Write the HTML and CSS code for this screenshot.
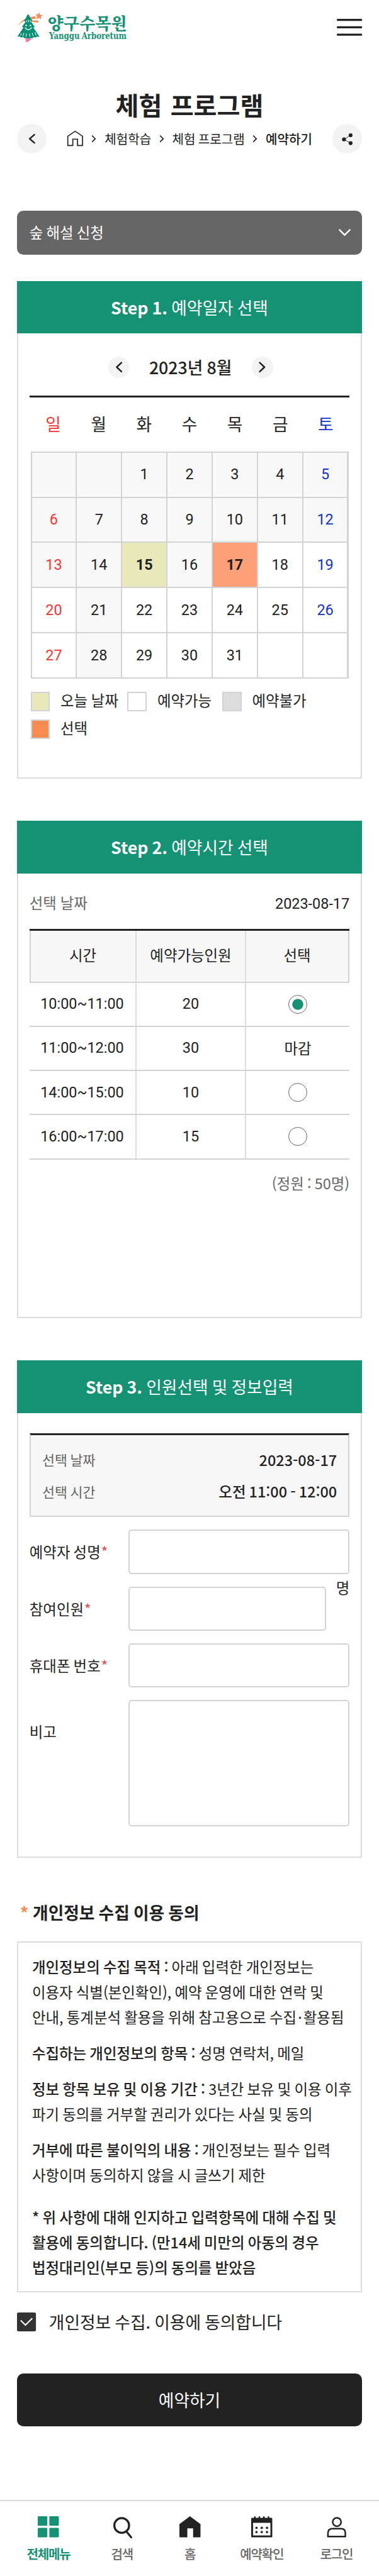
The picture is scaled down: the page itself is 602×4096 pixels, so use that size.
FILE: index.html
```html
<!DOCTYPE html>
<html lang="ko">
<head>
<meta charset="utf-8">
<title>양구수목원 - 체험 프로그램 예약하기</title>
<link rel="stylesheet" href="styles.css">
</head>
<body>
<header class="topbar">
  <svg class="logo" viewBox="0 0 208 56" role="img" aria-label="양구수목원">
    <path d="M16 45h11v6l-4 3-2 2h-4l-1-3z" fill="#ee7fae"/>
    <path d="M1 26Q10 13 20 10L34 7Q36 8 35 12L24 13Q10 15 1 26z" fill="#f78b52"/>
    <path d="M25 15l14 0q3 2 1 4l-13-2z" fill="#f78b52"/>
    <path d="M42.500 0l1.600 4.600 4.900.4-3.900 3 .8 5-4.400-2.900-4.800 1.800 1.600-4.800-3.300-3.800 5 .4z" fill="#f78b52"/>
    <path d="M21.500 3.500q1.600 1.200 2.600 4l5.400 9-3 .6 7.300 10.500-3 .5 12 18-5-.7-2 2-4-1-2.500 2.500-3.500-1-4 1.800-4-1.800-3.500 1-2.500-2.500-4 1-2-2-5 .4 11.500-17.700-3-.5 7.200-10.500-3-.6 4.800-9q.5-2.500 2.200-4z" fill="#039074"/>
    <g fill="none" stroke="#fff" stroke-linecap="round" stroke-width="1.300">
      <path d="M19 15l-.8 2.500M22 14.500v3M25 15l.6 2.500M8 40l-1 3M13 39l-1.500 5M18 40l-.7 5M24 40l.6 5M29 39l1.600 5M34 38l2.500 5"/>
      <path d="M15.500 29q6 7.500 12 0" stroke-width="1.800"/>
    </g>
    <circle cx="17.500" cy="24.500" r="1.600" fill="#fff"/><circle cx="25.500" cy="24.500" r="1.600" fill="#fff"/>
    <text class="logo-ko" x="58" y="32" textLength="151" lengthAdjust="spacingAndGlyphs">양구수목원</text>
    <text class="logo-en" x="61" y="50.500" textLength="147" lengthAdjust="spacingAndGlyphs">Yanggu Arboretum</text>
  </svg>
  <svg class="menu" viewBox="0 0 48 32"><g fill="#222"><rect width="48" height="4" rx="1.500"/><rect y="14" width="48" height="4" rx="1.500"/><rect y="28" width="48" height="4" rx="1.500"/></g></svg>
</header>

<main class="page">
  <h1 class="title">체험 프로그램</h1>
  <div class="crumb-row">
    <span class="round"><svg viewBox="0 0 56 56"><path d="M33 20.500l-9 7.700 9 7.800" class="ln thick"/></svg></span>
    <nav class="crumbs">
      <svg class="home" viewBox="0 0 32 32"><path d="M2 29.200V11.500L16 2l14 9.500v17.700H20.500V17h-9v12.200z" class="ln"/></svg>
      <svg class="sep" viewBox="0 0 10 16"><path d="M1.500 2l6 6-6 6" class="ln"/></svg>
      <span>체험학습</span>
      <svg class="sep" viewBox="0 0 10 16"><path d="M1.500 2l6 6-6 6" class="ln"/></svg>
      <span>체험 프로그램</span>
      <svg class="sep" viewBox="0 0 10 16"><path d="M1.500 2l6 6-6 6" class="ln"/></svg>
      <span class="here">예약하기</span>
    </nav>
    <span class="round"><svg viewBox="0 0 56 56"><path d="M34.500 21.500l-12.500 8 12.500 7" fill="none" stroke="#222"/><g fill="#222"><circle cx="34.500" cy="21.500" r="3.700"/><circle cx="22" cy="29.500" r="3.700"/><circle cx="34.500" cy="36.500" r="3.700"/></g></svg></span>
  </div>

  <div class="select"><span>숲 해설 신청</span><svg viewBox="0 0 26 16"><path d="M2 2l11 11L24 2" fill="none" stroke="#fff" stroke-width="3"/></svg></div>

  <section class="card step1">
    <h2 class="card-head"><b>Step 1.</b> 예약일자 선택</h2>
    <div class="card-body">
      <div class="month">
        <span class="round small"><svg viewBox="0 0 40 40"><path d="M25 11.500l-9 8.500 9 8.500" class="ln thick"/></svg></span>
        <strong>2023년 8월</strong>
        <span class="round small"><svg viewBox="0 0 40 40"><path d="M15 11.500l9 8.500-9 8.500" class="ln thick"/></svg></span>
      </div>
      <div class="week"><span class="sun">일</span><span>월</span><span>화</span><span>수</span><span>목</span><span>금</span><span class="sat">토</span></div>
      <div class="days">
        <i class="off"></i><i class="off"></i><i class="off">1</i><i class="off">2</i><i class="off">3</i><i class="off">4</i><i class="off sat">5</i>
        <i class="off sun">6</i><i class="off">7</i><i class="off">8</i><i class="off">9</i><i class="off">10</i><i class="off">11</i><i class="off sat">12</i>
        <i class="off sun">13</i><i class="off">14</i><i class="today">15</i><i class="off">16</i><i class="picked">17</i><i>18</i><i class="sat">19</i>
        <i class="sun">20</i><i class="off">21</i><i>22</i><i>23</i><i>24</i><i>25</i><i class="sat">26</i>
        <i class="sun">27</i><i class="off">28</i><i>29</i><i>30</i><i>31</i><i></i><i></i>
      </div>
      <ul class="legend">
        <li class="l-today">오늘 날짜</li><li>예약가능</li><li class="l-off">예약불가</li><li class="l-picked">선택</li>
      </ul>
    </div>
  </section>

  <section class="card step2">
    <h2 class="card-head"><b>Step 2.</b> 예약시간 선택</h2>
    <div class="card-body">
      <div class="chosen"><span>선택 날짜</span><em>2023-08-17</em></div>
      <div class="times">
        <div class="tr th"><span>시간</span><span>예약가능인원</span><span>선택</span></div>
        <div class="tr"><span>10:00~11:00</span><span>20</span><span><i class="radio on"></i></span></div>
        <div class="tr"><span>11:00~12:00</span><span>30</span><span class="closed">마감</span></div>
        <div class="tr"><span>14:00~15:00</span><span>10</span><span><i class="radio"></i></span></div>
        <div class="tr"><span>16:00~17:00</span><span>15</span><span><i class="radio"></i></span></div>
      </div>
      <p class="capacity">(정원 : 50명)</p>
    </div>
  </section>

  <section class="card step3">
    <h2 class="card-head"><b>Step 3.</b> 인원선택 및 정보입력</h2>
    <div class="card-body">
      <dl class="summary">
        <dt>선택 날짜</dt><dd>2023-08-17</dd>
        <dt>선택 시간</dt><dd>오전 11:00 - 12:00</dd>
      </dl>
      <div class="field"><label>예약자 성명<sup>*</sup></label><span class="input"></span></div>
      <div class="field"><label>참여인원<sup>*</sup></label><span class="input"></span><span class="unit">명</span></div>
      <div class="field"><label>휴대폰 번호<sup>*</sup></label><span class="input"></span></div>
      <div class="field memo"><label>비고</label><span class="input"></span></div>
    </div>
  </section>

  <h3 class="agree-title"><span>*</span>개인정보 수집 이용 동의</h3>
  <div class="terms">
    <p><b>개인정보의 수집 목적 :</b> 아래 입력한 개인정보는<br>이용자 식별(본인확인), 예약 운영에 대한 연락 및<br>안내, 통계분석 활용을 위해 참고용으로 수집<span class="dot">·</span>활용됨</p>
    <p><b>수집하는 개인정보의 항목 :</b> 성명 연락처, 메일</p>
    <p><b>정보 항목 보유 및 이용 기간 :</b> 3년간 보유 및 이용 이후<br>파기 동의를 거부할 권리가 있다는 사실 및 동의</p>
    <p><b>거부에 따른 불이익의 내용 :</b> 개인정보는 필수 입력<br>사항이며 동의하지 않을 시 글쓰기 제한</p>
    <p class="notice">* 위 사항에 대해 인지하고 입력항목에 대해 수집 및<br>활용에 동의합니다. (만14세 미만의 아동의 경우<br>법정대리인(부모 등)의 동의를 받았음</p>
  </div>
  <div class="check">
    <svg viewBox="0 0 36 36"><rect width="36" height="36" rx="3" fill="#333"/><path d="M7 15l9 9L29 11" fill="none" stroke="#fff" stroke-width="2.600"/></svg>
    <span>개인정보 수집. 이용에 동의합니다</span>
  </div>
  <div class="submit">예약하기</div>
</main>

<nav class="tabs">
  <a class="active"><svg viewBox="0 0 40 40"><g fill="#159274"><rect width="18" height="18" rx="1.500"/><rect x="22" width="18" height="18" rx="1.500"/><rect y="22" width="18" height="18" rx="1.500"/><rect x="22" y="22" width="18" height="18" rx="1.500"/></g></svg>전체메뉴</a>
  <a><svg viewBox="0 0 40 40"><g fill="none" stroke="#222" stroke-width="4"><circle cx="19.500" cy="17.500" r="14"/><path d="M28.500 29l9 11" stroke-linecap="round" stroke-width="3.800"/></g></svg>검색</a>
  <a><svg viewBox="0 0 40 40"><path d="M20 0l20 15v23.500q0 1.500-1.500 1.500H26V23H15v17H1.500Q0 40 0 38.500V15z" fill="#222"/></svg>홈</a>
  <a><svg viewBox="0 0 40 40"><rect y="3" width="40" height="37" rx="1.500" fill="#222"/><path d="M7 4V1.500M15.500 4V1.500M24 4V1.500M33 4V1.500" stroke="#222" stroke-width="3" stroke-linecap="round"/><rect x="3.500" y="12.500" width="33" height="24" fill="#fff"/><g fill="#222"><circle cx="10" cy="22" r="2.200"/><circle cx="20" cy="22" r="2.200"/><circle cx="30" cy="22" r="2.200"/><circle cx="10" cy="30" r="2.200"/><circle cx="20" cy="30" r="2.200"/><circle cx="30" cy="30" r="2.200"/></g></svg>예약확인</a>
  <a><svg viewBox="0 0 40 40"><g fill="none" stroke="#222" stroke-width="3"><circle cx="20.500" cy="11" r="8"/><path d="M3.500 38.500V32q0-8.500 9-8.500h16q8 0 8 8.500v6.500z"/></g></svg>로그인</a>
</nav>
</body>
</html>
```
FILE: styles.css
```css
* { box-sizing: border-box; margin: 0; padding: 0; }
html { font-size: 8.365px; }
body {
  display: flex;
  flex-direction: column;
  height: 4096px;
  overflow: hidden;
  background: #fff;
  color: #222;
  font-family: "Noto Sans CJK KR", sans-serif;
  font-size: 2.8rem;
  line-height: 1.5;
  word-spacing: -.058em;
}
svg { display: block; overflow: visible; flex: none; }
ul { list-style: none; }
i, em { font-style: normal; }
.ln { fill: none; stroke: #222; stroke-width: 2; }
.thick { stroke-width: 3; stroke-linecap: round; stroke-linejoin: round; }

.topbar {
  display: flex;
  justify-content: space-between;
  align-items: center;
  height: 10.4rem;
  padding: 0 3.2rem;
}
.logo { width: 20.8rem; height: 5.6rem; }
.logo-ko { font: 900 31px "Noto Serif CJK KR", "Noto Sans CJK KR", serif; fill: #159274; }
.logo-en { font: 700 17px "DejaVu Serif", serif; fill: #159274; }
.menu { width: 4.8rem; height: 3.2rem; }

.page { padding: 5.8rem 3.2rem 0; }
.title { font-size: 4.8rem; font-weight: 700; line-height: 7.2rem; text-align: center; word-spacing: .05em; }
.crumb-row { display: flex; justify-content: space-between; align-items: center; height: 5.6rem; margin-top: .2rem; }
.round { width: 5.6rem; height: 5.6rem; border-radius: 50%; background: #f3f3f3; }
.round.small { width: 4rem; height: 4rem; }
.crumbs { display: flex; align-items: center; gap: 1.5rem; font-size: 2.4rem; line-height: 3.6rem; }
.home { width: 3.2rem; height: 3.2rem; margin-top: -.2rem; }
.sep { width: 1rem; height: 1.6rem; }
.here { font-weight: 500; }

.select {
  display: flex;
  justify-content: space-between;
  align-items: center;
  height: 8.4rem;
  margin-top: 10.8rem;
  padding: 0 2.1rem 0 2.4rem;
  border-radius: 1.2rem;
  background: #666;
  color: #fff;
}
.select svg { width: 2.5rem; height: 1.6rem; }

.card { height: 94.6rem; margin-top: 8rem; border: 2px solid #ddd; border-top: 0; }
.step1 { margin-top: 5rem; }
.card-head {
  height: 10rem;
  margin: 0 -2px;
  background: #159274;
  color: #fff;
  font-size: 3.2rem;
  font-weight: 400;
  line-height: 10rem;
  text-align: center;
}
.card-body { padding: 0 calc(2.4rem - 2px); }

.month { display: flex; justify-content: center; gap: 3.8rem; height: 11.8rem; padding: 4.4rem 0 0 .4rem; }
.month strong { font-size: 3.2rem; font-weight: 500; line-height: 4rem; }
.week {
  display: grid;
  grid-template-columns: repeat(7, 1fr);
  height: 10.6rem;
  padding: 0 .2rem;
  border-top: 3px solid #222;
  font-size: 3.2rem;
  line-height: 10rem;
  text-align: center;
}
.sun { color: #ff3333; }
.sat { color: #1233cc; }
.days {
  display: grid;
  grid-template-columns: repeat(7, 1fr);
  grid-template-rows: repeat(5, 1fr);
  gap: 2px;
  height: 43.2rem;
  margin: 0 .2rem;
  padding: 2px;
  background: #d3d3d3;
  font-family: Roboto, "Noto Sans CJK KR", sans-serif;
}
.days i { display: flex; align-items: center; justify-content: center; background: #fff; }
.days .off { background: #f8f8f8; }
.days .today { background: #e9e8ba; font-weight: 700; }
.days .picked { background: #fda077; font-weight: 700; }
.legend {
  display: grid;
  grid-template-columns: 18.4rem 18rem 18rem;
  row-gap: 2rem;
  margin: 2.8rem .2rem 0;
}
.legend li { display: flex; align-items: center; gap: 2rem; height: 3.2rem; white-space: nowrap; word-spacing: 0; font-family: Roboto, "Noto Sans CJK KR", sans-serif; }
.legend li::before { content: ""; width: 3.2rem; height: 3.2rem; border: 2px solid #d3d3d3; background: #fff; }
.legend .l-today::before { background: #e9e8ba; }
.legend .l-off::before { background: #ddd; }
.legend .l-picked::before { background: #f78b52; }

.chosen { display: flex; justify-content: space-between; height: 10.6rem; line-height: 11.6rem; word-spacing: 0; font-family: Roboto, "Noto Sans CJK KR", sans-serif; }
.chosen span { color: #666; }
.times { border-top: 3px solid #222; }
.tr {
  display: grid;
  grid-template-columns: 20.1rem 20.8rem 1fr;
  height: 8.4rem;
  border-bottom: 2px solid #d3d3d3;
  font-family: Roboto, "Noto Sans CJK KR", sans-serif;
  line-height: 8rem;
}
.th {
  grid-template-columns: calc(20.1rem - 2px) 20.8rem 1fr;
  height: calc(10.2rem - 3px);
  border-left: 2px solid #d3d3d3;
  border-right: 2px solid #d3d3d3;
  background: #f7f7f7;
  line-height: 9.8rem;
}
.tr span { display: flex; align-items: center; justify-content: center; }
.tr span + span { border-left: 2px solid #ddd; }
.tr span:first-child { padding-right: .1rem; }
.tr .closed { font-family: "Noto Sans CJK KR", sans-serif; }
.radio { display: block; width: 3.6rem; height: 3.6rem; border: 1.5px solid #666; border-radius: 50%; }
.radio.on { background: radial-gradient(circle, #159274 1rem, #fff 1.06rem); }
.capacity { margin-top: 2.4rem; color: #666; text-align: right; }

.summary {
  display: grid;
  grid-template-columns: auto 1fr;
  grid-auto-rows: 6rem;
  align-items: center;
  height: 16rem;
  margin-top: 3.8rem;
  padding: 1.8rem calc(2.4rem - 2px) 0;
  border: 2px solid #d3d3d3;
  border-top: 3px solid #222;
  background: #f7f7f7;
}
.summary dt { color: #666; font-size: 2.6rem; }
.summary dd { font-weight: 500; text-align: right; }
.field { display: grid; grid-template-columns: 18.8rem 1fr; height: 8.4rem; margin-top: 2.4rem; line-height: 8.4rem; }
.field:has(.unit) { grid-template-columns: 18.8rem 1fr 4.4rem; }
.field.memo { height: 24rem; line-height: 12rem; }
.field sup { color: #e8494d; vertical-align: baseline; font-size: 2.8rem; line-height: 0; padding-left: .1rem; }
.input { border: 2px solid #d3d3d3; border-radius: .6rem; background: #fff; }
.unit { line-height: 0; text-align: right; padding-top: .2rem; }

.agree-title { margin-top: 8rem; padding-left: .6rem; font-size: 3.2rem; font-weight: 700; line-height: 4.8rem; }
.agree-title span { color: #f78b52; margin-right: .8rem; }
.terms { height: 66.8rem; margin-top: 3rem; padding: calc(2.4rem - 2px) 0 0 calc(2.9rem - 2px); border: 2px solid #ddd; line-height: 4.8rem; white-space: nowrap; }
.terms p + p { margin-top: 2rem; }
.terms p.notice { margin-top: 3.2rem; font-weight: 500; }
.terms b { font-weight: 500; }
.dot { padding: 0 .25rem; }
.check { display: flex; align-items: center; gap: 2.5rem; height: 3.6rem; margin-top: 3.8rem; font-size: 3.2rem; line-height: 3.6rem; }
.check svg { width: 3.6rem; height: 3.6rem; }
.submit { height: 10rem; margin-top: 8rem; border-radius: 1.2rem; background: #222; color: #fff; font-size: 3.2rem; line-height: 10rem; text-align: center; }

.tabs {
  display: grid;
  grid-template-columns: 14rem 13.9rem 11.9rem 15.4rem 13rem;
  height: 14.5rem;
  margin-top: auto;
  padding: calc(3.1rem - 2px) 0 0 2.2rem;
  border-top: 2px solid #ddd;
}
.tabs a { display: flex; flex-direction: column; align-items: center; gap: 1.4rem; color: #666; font-size: 2.4rem; font-weight: 500; letter-spacing: -.06em; line-height: 3.6rem; }
.tabs svg { width: 4rem; height: 4rem; }
.tabs .active { color: #159274; font-weight: 700; }
```
